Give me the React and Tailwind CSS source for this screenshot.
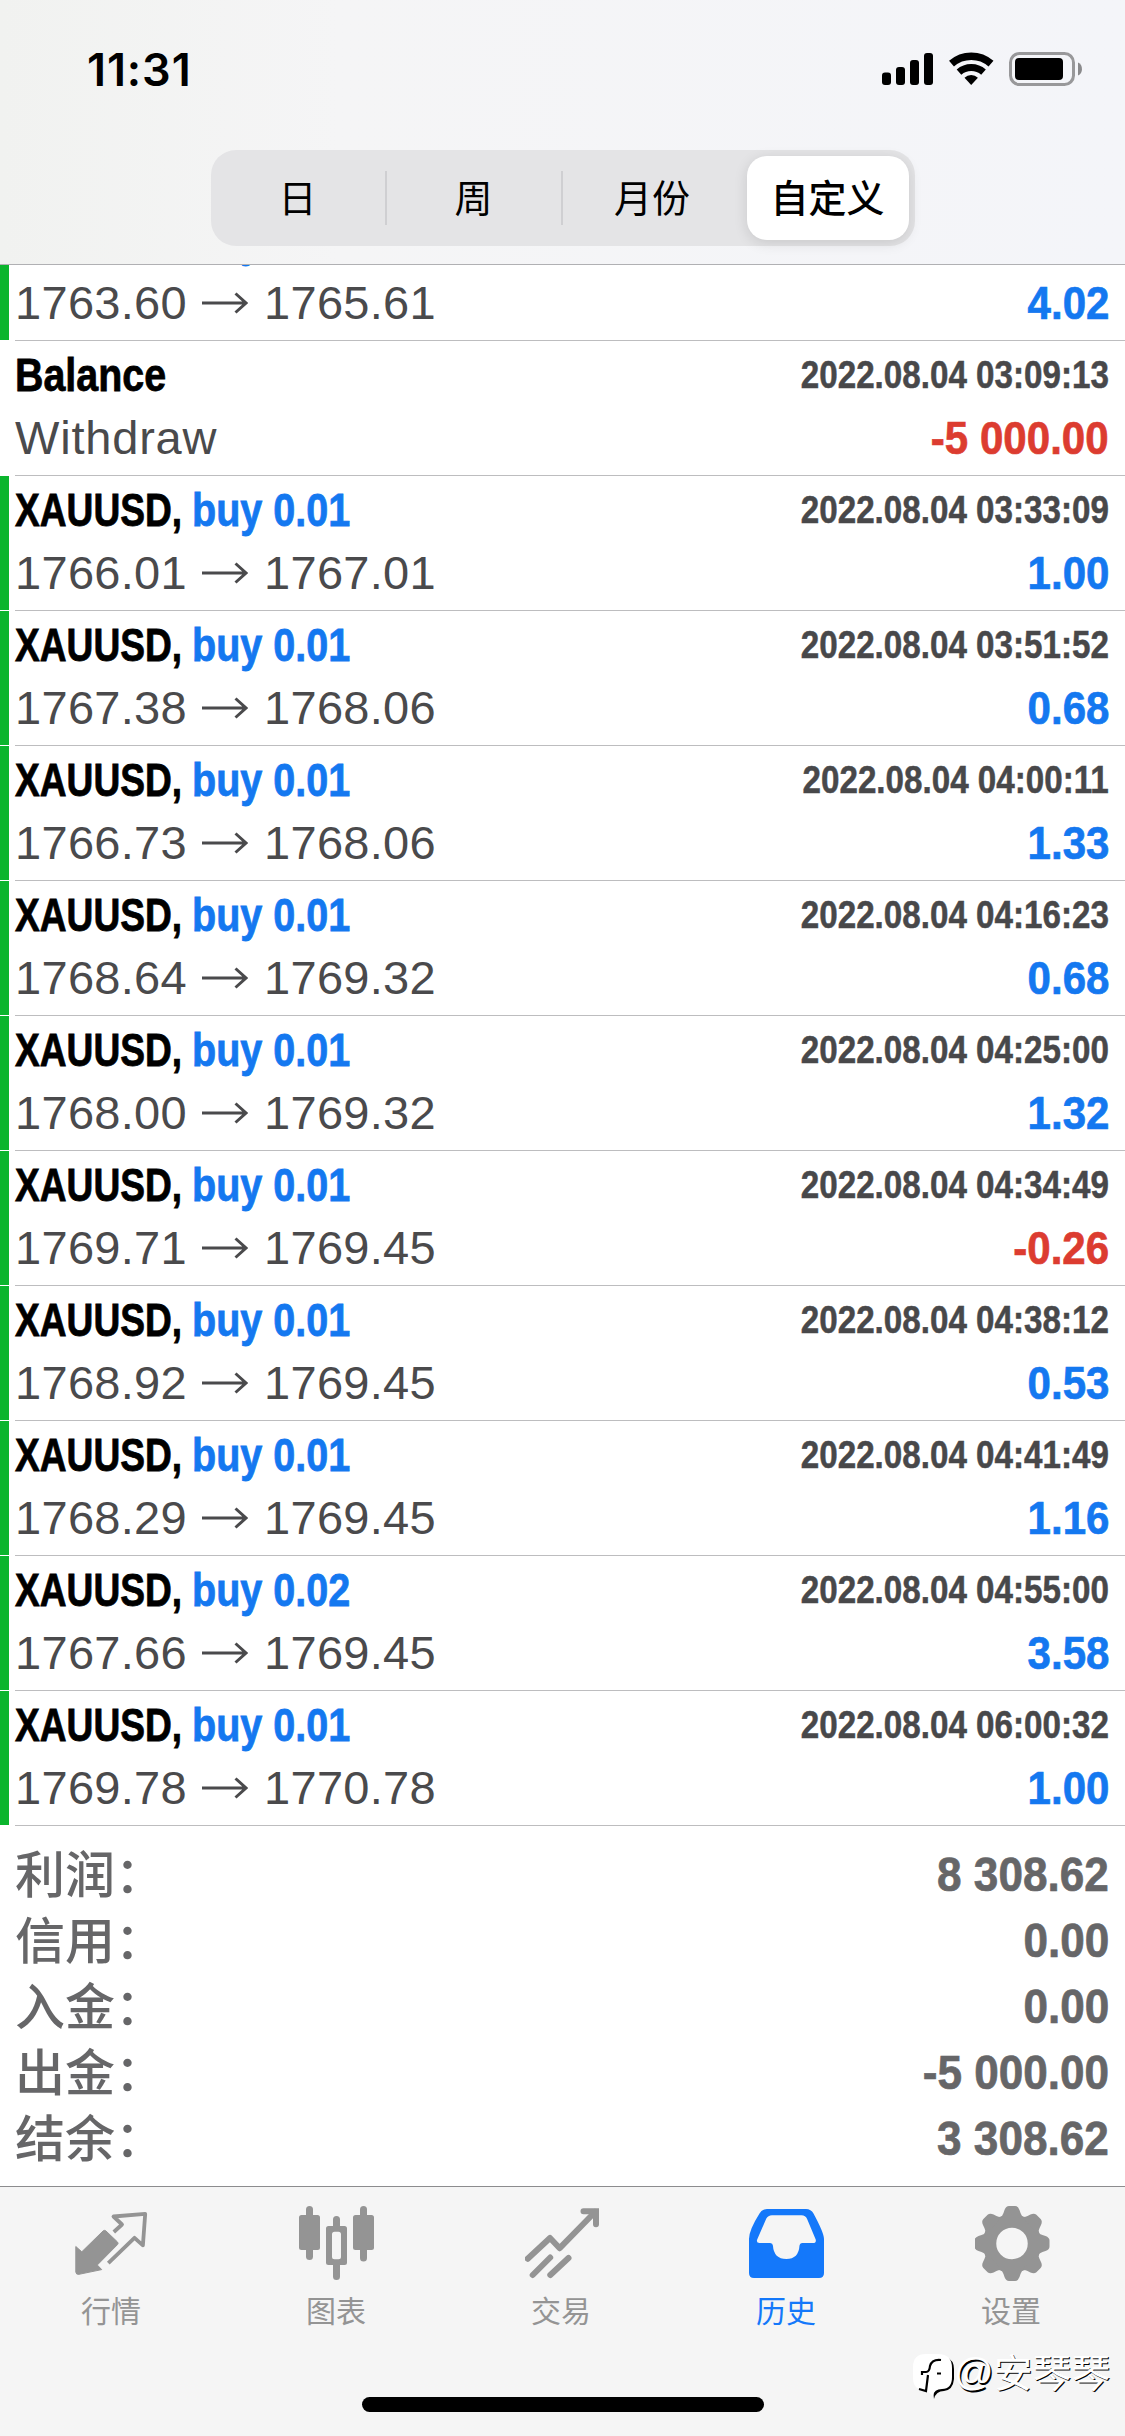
const ROWS = [
  { symbol: "XAUUSD", side: "buy 0.01", from: "1763.60", to: "1765.61", profit: "4.02" },
  { symbol: "Balance", note: "Withdraw", date: "2022.08.04 03:09:13", profit: "-5 000.00" },
  { symbol: "XAUUSD", side: "buy 0.01", from: "1766.01", to: "1767.01", date: "2022.08.04 03:33:09", profit: "1.00" },
  { symbol: "XAUUSD", side: "buy 0.01", from: "1767.38", to: "1768.06", date: "2022.08.04 03:51:52", profit: "0.68" },
  { symbol: "XAUUSD", side: "buy 0.01", from: "1766.73", to: "1768.06", date: "2022.08.04 04:00:11", profit: "1.33" },
  { symbol: "XAUUSD", side: "buy 0.01", from: "1768.64", to: "1769.32", date: "2022.08.04 04:16:23", profit: "0.68" },
  { symbol: "XAUUSD", side: "buy 0.01", from: "1768.00", to: "1769.32", date: "2022.08.04 04:25:00", profit: "1.32" },
  { symbol: "XAUUSD", side: "buy 0.01", from: "1769.71", to: "1769.45", date: "2022.08.04 04:34:49", profit: "-0.26" },
  { symbol: "XAUUSD", side: "buy 0.01", from: "1768.92", to: "1769.45", date: "2022.08.04 04:38:12", profit: "0.53" },
  { symbol: "XAUUSD", side: "buy 0.01", from: "1768.29", to: "1769.45", date: "2022.08.04 04:41:49", profit: "1.16" },
  { symbol: "XAUUSD", side: "buy 0.02", from: "1767.66", to: "1769.45", date: "2022.08.04 04:55:00", profit: "3.58" },
  { symbol: "XAUUSD", side: "buy 0.01", from: "1769.78", to: "1770.78", date: "2022.08.04 06:00:32", profit: "1.00" },
];

const TOTALS = [
  { label: "利润：", value: "8 308.62" },
  { label: "信用：", value: "0.00" },
  { label: "入金：", value: "0.00" },
  { label: "出金：", value: "-5 000.00" },
  { label: "结余：", value: "3 308.62" },
];

const PERIODS = ["日", "周", "月份", "自定义"];

function StatusBar() {
  return (
    <div className="flex h-[138px] items-center justify-between pl-[87px] pr-[42px]">
      <span className="font-['Inter'] text-[45px] font-semibold leading-none tracking-[0.9px]">11:31</span>
      <svg className="h-[36px] w-[201px]" viewBox="0 0 201 36">
        <rect x="0" y="21.5" width="9" height="12.5" rx="3" />
        <rect x="14" y="16" width="9" height="18" rx="3" />
        <rect x="28" y="9" width="9" height="25" rx="3" />
        <rect x="42" y="2" width="9" height="32" rx="3" />
        <g fill="none" stroke="#000">
          <path d="M69.5 12.6a30 30 0 0 1 39.5 0" strokeWidth="7.5" />
          <path d="M77 21.2a18.5 18.5 0 0 1 24.5 0" strokeWidth="7" />
        </g>
        <path d="M89.2 34l-6.7-7.2a9.5 9.5 0 0 1 13.4 0z" />
        <rect x="128.5" y="2.5" width="63" height="31" rx="9" fill="none" stroke="#98989a" strokeWidth="3" />
        <rect x="133" y="7" width="48" height="22" rx="4" />
        <path d="M196 11.5c5.3 2 5.3 11 0 13z" fill="#8a8a8c" />
      </svg>
    </div>
  );
}

function PeriodTabs() {
  return (
    <div className="mx-auto mt-[12px] grid h-[96px] w-[704px] grid-cols-4 items-center rounded-[25px] bg-[#e4e4e6] font-['Noto_Sans_CJK_SC',sans-serif] text-[38px]">
      {PERIODS.map((p, i) =>
        i === 3 ? (
          <div key={p} className="ml-[8px] mr-[6px] flex h-[84px] items-center justify-center rounded-[20px] bg-white pb-[6px] font-medium shadow-[0_3px_14px_rgba(0,0,0,0.12)]">
            {p}
          </div>
        ) : (
          <div key={p} className={`flex h-[54px] items-center justify-center pb-[6px] ${i < 2 ? "border-r-2 border-[#cfcfd2]" : "pl-[3px]"}`}>
            {p}
          </div>
        )
      )}
    </div>
  );
}

function Row({ row }) {
  const color = row.profit.startsWith("-") ? "text-[#dc3c30]" : "text-[#1478f0]";
  return (
    <div className="flex h-[135px] shrink-0">
      <div className={`h-[134px] w-[9px] ${row.side ? "bg-[#0bb52d]" : ""}`} />
      <div className="ml-[6px] flex-1 border-b border-[#bdbdbf] pr-[16px] pt-[2px]">
        <div className="flex h-[64px] items-center justify-between font-bold">
          <div className="flex whitespace-nowrap text-[47px] [-webkit-text-stroke:0.8px_currentColor]">
            {row.side ? (
              <>
                <span className="w-[177px] origin-left scale-x-[0.79]">{row.symbol},</span>
                <span className="origin-left scale-x-[0.842] text-[#1478f0]">{row.side}</span>
              </>
            ) : (
              <span className="origin-left scale-x-[0.838]">{row.symbol}</span>
            )}
          </div>
          <span className="origin-right scale-x-[0.873] whitespace-nowrap text-[38px] text-[#48484a] [-webkit-text-stroke:0.5px_currentColor]">{row.date}</span>
        </div>
        <div className="flex h-[62px] items-center justify-between text-[47px] text-[#4a4a4c]">
          {row.side ? (
            <div className="flex items-center tracking-[0.3px]">
              <span className="w-[187px]">{row.from}</span>
              <svg className="h-[24px] w-[46px]" viewBox="0 0 46 24" fill="none" stroke="currentColor" strokeWidth="3">
                <path d="M0 12h44M33.5 2.5L44 12l-10.5 9.5" />
              </svg>
              <span className="ml-[16px]">{row.to}</span>
            </div>
          ) : (
            <span className="tracking-[0.8px]">{row.note}</span>
          )}
          <span className={`origin-right scale-x-[0.895] font-bold [-webkit-text-stroke:0.7px_currentColor] ${color}`}>{row.profit}</span>
        </div>
      </div>
    </div>
  );
}

function QuotesIcon() {
  return (
    <svg className="size-[75px]" viewBox="0 0 75 75">
      <path
        d="M.8 40.5l6 5.3L28 25q1.5-1.3 3 0l11.5 11q1.2 1.3 0 2.6L22.3 59l4.4 4.6L4 68.3Q1 68.8.8 66z"
        fill="currentColor"
        stroke="currentColor"
        strokeLinejoin="round"
      />
      <path d="M38.8 26l8.2-7.5-8.5-8 31.7-2.7-2.3 31.5-8.4-7.5-26.2 25.3" fill="none" stroke="currentColor" strokeWidth="3.8" strokeLinejoin="round" />
    </svg>
  );
}

function ChartIcon() {
  return (
    <svg className="size-[75px] overflow-visible" viewBox="0 0 75 75" fill="currentColor">
      <rect x="-1" y="9" width="21" height="35" rx="2.5" />
      <rect x="6" y="0" width="7" height="54" rx="3.5" />
      <path d="M28.5 20h16q2.5 0 2.5 2.5v34q0 2.5-2.5 2.5h-16q-2.5 0-2.5-2.5v-34q0-2.5 2.5-2.5zM34.5 25.7q-2.500 0-2.500 2.500v22.600q0 2.500 2.500 2.500h4q2.500 0 2.500-2.500V28.200q0-2.500-2.500-2.500z" fillRule="evenodd" />
      <path d="M33 21v-7.500a3.500 3.500 0 0 1 7 0V21zM33 58v12.500a3.500 3.500 0 0 0 7 0V58z" />
      <rect x="53" y="9" width="21" height="35" rx="2.5" />
      <rect x="60" y="0" width="7" height="55.5" rx="3.5" />
    </svg>
  );
}

function TradeIcon() {
  return (
    <svg className="size-[75px]" viewBox="0 0 75 75" fill="none" stroke="currentColor" strokeWidth="6" strokeLinecap="round">
      <path d="M2.7 52.8L25 32l9.7 10.2L70 6" strokeLinejoin="round" />
      <path d="M58.5 5.2H71v13" />
      <path d="M7.7 69l17.5-17.5M25.3 69l18.2-17" />
    </svg>
  );
}

function HistoryIcon() {
  return (
    <svg className="size-[75px] overflow-visible" viewBox="0 0 75 75" fill="currentColor" fillRule="evenodd">
      <path d="M17 3h39q5 0 7.5 4.5Q74 27 74 33v34q0 5-5 5H4q-5 0-5-5V33Q-1 24 9.500 7.500 12 3 17 3zM22 9.300q-4 0-5.800 3.500L7.200 33.500Q6 37 9.500 37h10.700q2.500 0 2.700 2.500 1 13.500 13.400 13.500t13.200-13.500q.3-2.500 2.500-2.500h11q3.500 0 2.700-3.500L57 12.800q-1.500-3.500-5.500-3.500z" />
    </svg>
  );
}

function SettingsIcon() {
  return (
    <svg className="size-[75px]" viewBox="0 0 75 75" fill="currentColor">
      <circle cx="37" cy="37.5" r="22.5" fill="none" stroke="currentColor" strokeWidth="13.5" />
      {[0, 45, 90, 135, 180, 225, 270, 315].map((a) => (
        <path key={a} d="M24.5 12q3-1.500 4-5l1-3Q31 0 34 0h6q3 0 4.500 4l1 3q1 3.500 4 5z" transform={`rotate(${a} 37 37.5)`} />
      ))}
    </svg>
  );
}

const TABS = [
  { label: "行情", icon: QuotesIcon },
  { label: "图表", icon: ChartIcon },
  { label: "交易", icon: TradeIcon },
  { label: "历史", icon: HistoryIcon, active: true },
  { label: "设置", icon: SettingsIcon },
];

export default function App() {
  return (
    <div className="relative flex h-[2436px] w-[1125px] flex-col overflow-hidden bg-white font-['Liberation_Sans',sans-serif] text-black">
      <header className="h-[265px] shrink-0 border-b border-[#b0b0b3] bg-linear-to-r from-[#f1f2f0] via-[#f5f5f6] via-30% to-[#f4f5f9]">
        <StatusBar />
        <PeriodTabs />
      </header>

      {/* Deals, scrolled so the first one is cut by the header */}
      <main className="flex h-[1561px] shrink-0 flex-col justify-end overflow-hidden">
        {ROWS.map((row, i) => (
          <Row key={i} row={row} />
        ))}
      </main>

      {/* Totals */}
      <section className="h-[360px] shrink-0 pl-[15px] pr-[16px] pt-[15px] text-[#666668]">
        {TOTALS.map(({ label, value }) => (
          <div key={label} className="flex h-[66px] items-center justify-between">
            <span className="pb-[6px] font-['Noto_Sans_CJK_SC',sans-serif] text-[50px] font-medium leading-none">{label}</span>
            <span className="origin-right scale-x-[0.9] text-[49px] font-bold leading-none [-webkit-text-stroke:0.7px_currentColor]">{value}</span>
          </div>
        ))}
      </section>

      <nav className="grid h-[250px] shrink-0 grid-cols-5 border-t border-[#8c8c8e] bg-[#f5f5f5] pt-[19px]">
        {TABS.map(({ label, icon: Icon, active }) => (
          <div key={label} className={`flex flex-col items-center ${active ? "text-[#1478fa]" : "text-[#949494]"}`}>
            <Icon />
            <span className="mt-[13px] pr-[3px] font-['Noto_Sans_CJK_SC',sans-serif] text-[30px] leading-[30px]">{label}</span>
          </div>
        ))}
      </nav>

      {/* Watermark */}
      <div className="absolute left-[913px] top-[2346px] flex text-white">
        <svg className="mt-[6px] h-[50px] w-[45px]" viewBox="0 0 45 50">
          <path d="M33 5q8 3 8 12v10q-1 11-10 12-8 0-10 8-1-6 0-10z" fill="#000" />
          <path d="M13 2h12q14 0 14 14v9q0 12-10 12-8 0-9 7l-6-5L4 36q-4-3-4-10V15Q0 2 13 2z" fill="#fff" />
          <path d="M28 8q-9-1-11 6-.5 6-4 6H9v3M15 23l-2 16-7-2M24 21.500h4" fill="none" stroke="#000" strokeWidth="2.2" />
        </svg>
        <span className="-ml-[4px] text-[39px] leading-[52px] [text-shadow:1.5px_1.5px_0_#000]">@</span>
        <span className="font-['Noto_Sans_CJK_SC',sans-serif] text-[39px] leading-[48px] [text-shadow:1px_1px_0_#000]">安琴琴</span>
      </div>

      <div className="absolute bottom-[24px] left-[362px] h-[15px] w-[402px] rounded-full bg-black" />
    </div>
  );
}
